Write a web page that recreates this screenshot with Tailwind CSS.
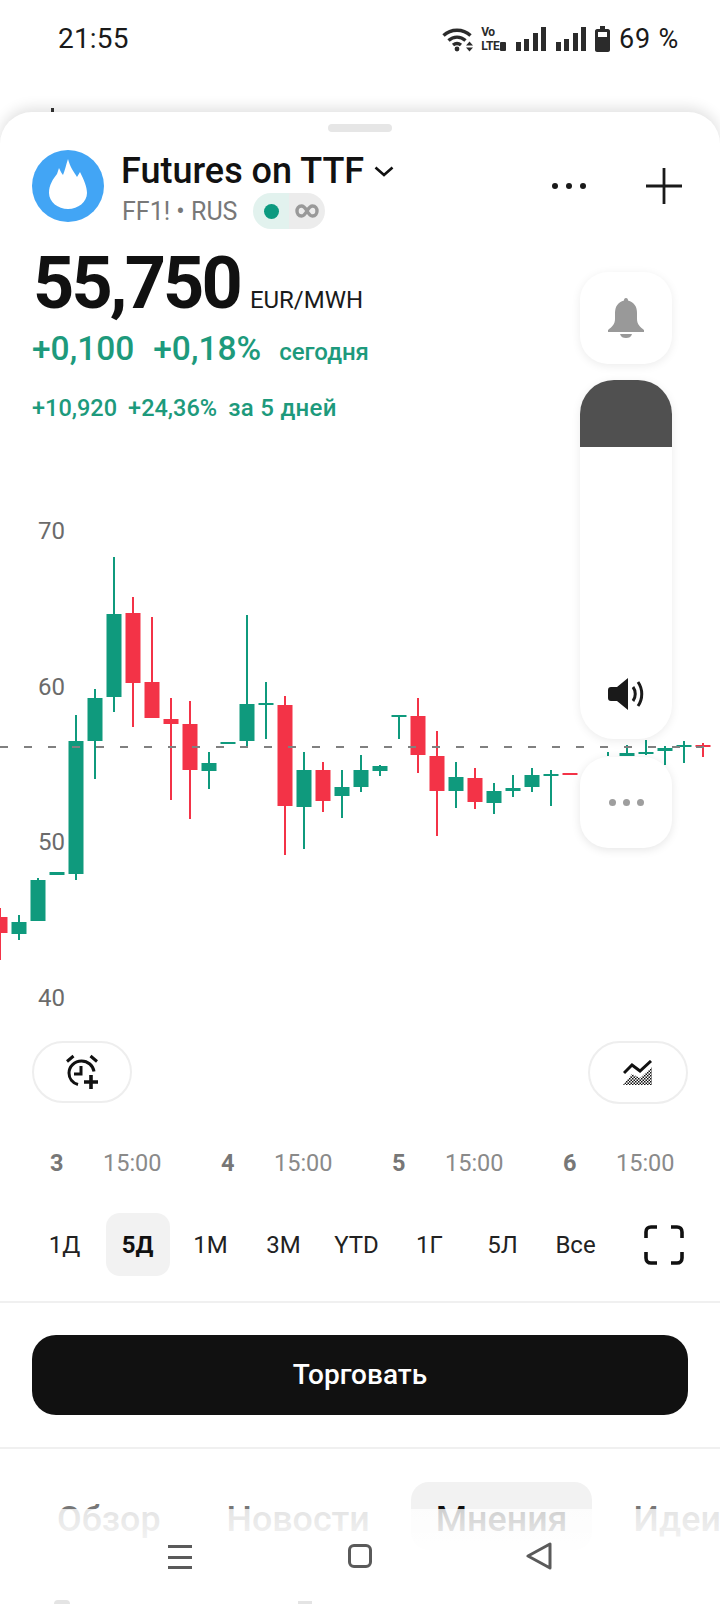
<!DOCTYPE html>
<html lang="ru">
  <head>
    <meta charset="UTF-8" />
    <title>Futures on TTF</title>
    <meta name="viewport" content="width=device-width, initial-scale=1.0" />
    <script src="https://cdn.jsdelivr.net/npm/@tailwindcss/browser@4"></script>
  </head>

  <body class="bg-white font-['Roboto',sans-serif]">
    <div class="relative w-[720px] h-[1604px] overflow-hidden bg-white">
      <!-- Status bar -->
      <div class="h-[78px] flex items-center pl-[58px] pr-[41px] text-[#1a1a1a]">
        <span class="text-[28px] leading-none tracking-[0.2px]">21:55</span>
        <div class="ml-auto flex items-center">
          <svg width="32" height="26" viewBox="0 0 32 26" fill="none" stroke="#2b2b2b" stroke-width="3.4">
            <path d="M1.5 9.5C9 2.5 21 2.5 28.5 9.5" />
            <path d="M6.5 14.5C11.5 10 18.5 10 23.5 14.5" />
            <path d="M11 19C13.5 17 16.5 17 19 19" />
            <circle cx="15" cy="23" r="2.4" fill="#2b2b2b" stroke="none" />
            <path d="M24 19.5L27.5 15.5L31 19.5ZM24 21.5L27.5 25.5L31 21.5Z" fill="#2b2b2b" stroke="none" />
          </svg>
          <div class="ml-[7px] w-[25px] flex flex-col text-[#2b2b2b] font-bold text-[12px] leading-[14px] tracking-[-0.4px]">
            <span>Vo</span>
            <span class="flex items-center">LTE<span class="ml-[1px] w-[6px] h-[9px] bg-[#2b2b2b] rounded-[1px]"></span></span>
          </div>
          <div class="ml-[10px] flex items-end gap-[3.300px] h-[24px]">
            <span class="w-[5px] h-[9px] bg-[#2b2b2b]"></span>
            <span class="w-[5px] h-[12px] bg-[#2b2b2b]"></span>
            <span class="w-[5px] h-[18px] bg-[#2b2b2b]"></span>
            <span class="w-[5px] h-[24px] bg-[#2b2b2b]"></span>
          </div>
          <div class="ml-[10px] flex items-end gap-[3.300px] h-[24px]">
            <span class="w-[5px] h-[9px] bg-[#2b2b2b]"></span>
            <span class="w-[5px] h-[12px] bg-[#2b2b2b]"></span>
            <span class="w-[5px] h-[18px] bg-[#2b2b2b]"></span>
            <span class="w-[5px] h-[24px] bg-[#2b2b2b]"></span>
          </div>
          <svg class="ml-[9px]" width="15" height="26" viewBox="0 0 15 26" fill="#2b2b2b">
            <path d="M5 0H10V3H13C14 3 15 4 15 5V24C15 25 14 26 13 26H2C1 26 0 25 0 24V5C0 4 1 3 2 3H5Z" />
            <rect x="3" y="6" width="9" height="5" fill="#fff" />
          </svg>
          <span class="ml-[9px] text-[27px] leading-none tracking-[0.8px]">69 %</span>
        </div>
      </div>

      <!-- Bit of the page behind the sheet -->
      <span class="absolute left-[51px] top-[108px] w-[3px] h-[4px] bg-[#333]"></span>

      <!-- Sheet -->
      <div class="relative mt-[34px] h-[1492px] rounded-t-[32px] bg-white shadow-[0_-4px_14px_rgba(0,0,0,0.12)] overflow-hidden">
        <div class="pt-[12px] flex justify-center">
          <div class="w-[64px] h-[8px] rounded-full bg-[#e6e6e6]"></div>
        </div>

        <!-- Header -->
        <div class="mt-[18px] flex pl-[32px] h-[80px]">
          <svg width="72" height="72" viewBox="0 0 72 72">
            <circle cx="36" cy="36" r="36" fill="#42a5f5" />
            <path fill="#fff" d="M36 9C38 17 42 22 45 27L48 22C52 30 55 37 55 43C55 52 46 59 36 59C26 59 17 52 17 43C17 35 21 29 25 24L27 18C29 22 30 24 31 25C33 20 34 15 36 9Z" />
          </svg>
          <div class="ml-[17px]">
            <div class="flex items-center h-[36px] pt-[6px]">
              <span class="text-[36px] leading-none font-medium text-[#111]">Futures on TTF</span>
              <svg class="ml-[10px]" width="20" height="11" viewBox="0 0 20 11" fill="none" stroke="#111" stroke-width="2.6">
                <path d="M1.5 1.5L10 9L18.5 1.5" />
              </svg>
            </div>
            <div class="mt-[7px] flex items-center h-[36px] pl-[1px]">
              <span class="text-[25px] leading-none text-[#787878]">FF1! • RUS</span>
              <div class="ml-[16px] w-[72px] h-[36px] rounded-full overflow-hidden flex">
                <div class="w-[36px] bg-[#e2f2ee] flex items-center justify-center">
                  <span class="w-[15px] h-[15px] rounded-full bg-[#0d9a80]"></span>
                </div>
                <div class="w-[36px] bg-[#ececec] flex items-center justify-center">
                  <svg width="24" height="14" viewBox="0 0 24 14" fill="none" stroke="#999" stroke-width="3.4">
                    <path d="M12 7C10 3.5 8.500 2 6.500 2C3.500 2 2 4.500 2 7C2 9.500 3.500 12 6.500 12C8.500 12 10 10.500 12 7C14 3.500 15.500 2 17.500 2C20.500 2 22 4.500 22 7C22 9.500 20.500 12 17.500 12C15.500 12 14 10.500 12 7Z" />
                  </svg>
                </div>
              </div>
            </div>
          </div>
          <div class="ml-auto mr-[38px] mt-[17px] h-[38px] flex items-center">
            <div class="flex gap-[8px]">
              <span class="w-[6px] h-[6px] rounded-full bg-[#1a1a1a]"></span>
              <span class="w-[6px] h-[6px] rounded-full bg-[#1a1a1a]"></span>
              <span class="w-[6px] h-[6px] rounded-full bg-[#1a1a1a]"></span>
            </div>
            <svg class="ml-[60px]" width="36" height="36" viewBox="0 0 36 36" stroke="#1a1a1a" stroke-width="2.8">
              <path d="M18 0V36M0 18H36" />
            </svg>
          </div>
        </div>

        <!-- Quote -->
        <div class="mt-[18px] pl-[32px]">
          <div class="flex items-baseline h-[72px]">
            <span class="ml-[1px] text-[72px] leading-[72px] font-bold text-[#111] tracking-[-2.9px]">55,750</span>
            <span class="ml-[10px] text-[24px] leading-none text-[#1a1a1a]">EUR/MWH</span>
          </div>
          <div class="mt-[9px] flex items-baseline h-[40px] font-medium text-[#1d9a7c]">
            <span class="text-[33.500px] leading-[40px]">+0,100</span>
            <span class="ml-[19px] text-[33.500px] leading-[40px]">+0,18%</span>
            <span class="ml-[18px] text-[24px] leading-[40px]">сегодня</span>
          </div>
          <div class="mt-[23px] flex items-baseline h-[32px] font-medium text-[#1d9a7c] text-[23.500px] leading-[32px]">
            <span>+10,920</span>
            <span class="ml-[11px]">+24,36%</span>
            <span class="ml-[11px] text-[24px] tracking-[0.3px]">за 5 дней</span>
          </div>
        </div>

        <!-- Chart -->
        <div class="relative h-[606px]">
          <svg id="chart" class="absolute inset-0" width="720" height="606" viewBox="0 424 720 606"></svg>
          <span class="absolute left-[38px] top-[92px] text-[24px] leading-[30px] text-[#6b6b6b]">70</span>
          <span class="absolute left-[38px] top-[248px] text-[24px] leading-[30px] text-[#6b6b6b]">60</span>
          <span class="absolute left-[38px] top-[403px] text-[24px] leading-[30px] text-[#6b6b6b]">50</span>
          <span class="absolute left-[38px] top-[559px] text-[24px] leading-[30px] text-[#6b6b6b]">40</span>
        </div>

        <!-- Alert and indicator buttons -->
        <div class="mt-[11px] h-[63px] flex items-start justify-between pl-[32px] pr-[32px]">
          <div class="w-[100px] h-[62px] rounded-[31px] border-2 border-[#eeeeee] flex items-center justify-center">
            <svg width="36" height="36" viewBox="0 0 36 36" fill="none" stroke="#111" stroke-width="3">
              <path d="M3 7.500L9.500 2M33 7.500L26.500 2" />
              <path d="M14 30.500C8.500 29 5 24.500 5 19C5 12.500 10.500 7 17.500 7C24 7 29 11.500 30 17.500" />
              <path d="M17 12V20H10" />
              <path d="M27 21V35M20 28H34" stroke-width="3.600" />
            </svg>
          </div>
          <div class="w-[100px] h-[63px] rounded-[32px] border-2 border-[#eeeeee] flex items-center justify-center">
            <svg width="30" height="26" viewBox="0 0 30 26" fill="none">
              <defs>
                <pattern id="checker" width="3" height="3" patternUnits="userSpaceOnUse">
                  <rect width="1.500" height="1.500" fill="#111" />
                  <rect x="1.500" y="1.500" width="1.500" height="1.500" fill="#111" />
                </pattern>
              </defs>
              <path d="M0 25L9 14L17 18L29 7V25Z" fill="url(#checker)" />
              <path d="M1 13L9 5L17 11L28 1" stroke="#111" stroke-width="3" />
            </svg>
          </div>
        </div>

        <!-- Time axis -->
        <div class="mt-[43px] flex pl-[50px] h-[32px] text-[23.500px] leading-[32px] text-[#8a8a8a]">
          <div class="flex w-[171px] shrink-0"><span class="w-[53px] font-bold text-[#777]">3</span><span>15:00</span></div>
          <div class="flex w-[171px] shrink-0"><span class="w-[53px] font-bold text-[#777]">4</span><span>15:00</span></div>
          <div class="flex w-[171px] shrink-0"><span class="w-[53px] font-bold text-[#777]">5</span><span>15:00</span></div>
          <div class="flex w-[171px] shrink-0"><span class="w-[53px] font-bold text-[#777]">6</span><span>15:00</span></div>
        </div>

        <!-- Range tabs -->
        <div class="mt-[34px] h-[63px] flex items-center pl-[28px] pr-[36px] text-[24px] text-[#222]">
          <span class="w-[73px] text-center">1Д</span>
          <span class="w-[73px] flex justify-center"><span class="w-[64px] h-[63px] rounded-[14px] bg-[#f2f2f2] flex items-center justify-center font-bold text-[#111]">5Д</span></span>
          <span class="w-[73px] text-center">1М</span>
          <span class="w-[73px] text-center">3М</span>
          <span class="w-[73px] text-center">YTD</span>
          <span class="w-[73px] text-center">1Г</span>
          <span class="w-[73px] text-center">5Л</span>
          <span class="w-[73px] text-center">Все</span>
          <svg class="ml-auto" width="40" height="40" viewBox="0 0 40 40" fill="none" stroke="#111" stroke-width="3.600">
            <path d="M2 13V7C2 4 4 2 7 2H13M27 2H33C36 2 38 4 38 7V13M38 27V33C38 36 36 38 33 38H27M13 38H7C4 38 2 36 2 33V27" />
          </svg>
        </div>

        <div class="mt-[25px] h-[2px] bg-[#f0f0f0]"></div>

        <!-- Trade button -->
        <div class="mt-[32px] mx-[32px] h-[80px] rounded-[24px] bg-[#111] flex items-center justify-center text-white text-[28px] font-medium">Торговать</div>

        <div class="mt-[32px] h-[2px] bg-[#f0f0f0]"></div>

        <!-- Section tabs -->
        <div class="mt-[33px] flex pl-[32px] gap-[16px] text-[35.800px] font-medium text-[#777] whitespace-nowrap">
          <span class="h-[68px] px-[25px] pt-[8px] flex items-center">Обзор</span>
          <span class="h-[68px] px-[25px] pt-[8px] flex items-center">Новости</span>
          <span class="h-[68px] px-[25px] pt-[8px] flex items-center rounded-[18px] bg-[#f2f2f2] text-[#111]">Мнения</span>
          <span class="h-[68px] px-[25px] pt-[8px] flex items-center">Идеи</span>
        </div>
      </div>

      <!-- Floating chart controls -->
      <div class="absolute left-[580px] top-[272px] w-[92px] flex flex-col">
        <div class="h-[92px] rounded-[28px] bg-white shadow-[0_2px_10px_rgba(0,0,0,0.08)] flex items-center justify-center">
          <svg width="36" height="40" viewBox="0 0 36 40" fill="#999">
            <path d="M18 0C19.500 0 20 1 20 2.500C26 4 29 8.500 29 15V21C29 26 32 29 36 32V34H0V32C4 29 7 26 7 21V15C7 8.500 10 4 16 2.500C16 1 16.500 0 18 0Z" />
            <path d="M12 36H24C23 39 21 40 18 40C15 40 13 39 12 36Z" />
          </svg>
        </div>
        <div class="mt-[16px] h-[359px] rounded-[34px] bg-white shadow-[0_2px_10px_rgba(0,0,0,0.08)] overflow-hidden flex flex-col">
          <div class="h-[67px] bg-[#505050]"></div>
          <div class="flex-1 flex items-end justify-center pb-[29px]">
            <svg width="36" height="32" viewBox="0 0 36 32" fill="none">
              <path d="M0 12C0 10 1 9 3 9H9L20 0V32L9 23H3C1 23 0 22 0 20Z" fill="#1a1a1a" />
              <path d="M25 9C28 13 28 19 25 23" stroke="#1a1a1a" stroke-width="3" />
              <path d="M30 4C35 11 35 21 30 28" stroke="#1a1a1a" stroke-width="3" />
            </svg>
          </div>
        </div>
        <div class="mt-[18px] h-[91px] rounded-[28px] bg-white shadow-[0_2px_10px_rgba(0,0,0,0.1)] flex items-center justify-center gap-[7px]">
          <span class="w-[7px] h-[7px] rounded-full bg-[#9e9e9e]"></span>
          <span class="w-[7px] h-[7px] rounded-full bg-[#9e9e9e]"></span>
          <span class="w-[7px] h-[7px] rounded-full bg-[#9e9e9e]"></span>
        </div>
      </div>

      <!-- Navigation bar over the fading page -->
      <div class="absolute left-0 right-0 top-[1509px] h-[95px] bg-gradient-to-b from-white/80 to-white to-60%">
        <div class="absolute left-[168px] top-[36px] w-[24px] h-[24px] flex flex-col justify-between">
          <span class="h-[3px] bg-[#5a5a5a]"></span>
          <span class="h-[3px] bg-[#5a5a5a]"></span>
          <span class="h-[3px] bg-[#5a5a5a]"></span>
        </div>
        <div class="absolute left-[348px] top-[35px] w-[24px] h-[24px] rounded-[6px] border-[3px] border-[#5a5a5a]"></div>
        <svg class="absolute left-[526px] top-[33px]" width="26" height="28" viewBox="0 0 26 28" fill="none" stroke="#5a5a5a" stroke-width="3" stroke-linejoin="round">
          <path d="M24 2V26L2 14Z" />
        </svg>
        <span class="absolute left-[54px] top-[91px] w-[16px] h-[4px] rounded-t-full bg-[#e4e4e4]"></span>
        <span class="absolute left-[298px] top-[92px] w-[14px] h-[3px] bg-[#e4e4e4]"></span>
      </div>
    </div>

    <script>
      // [centre x, up?, wick top, wick bottom, body top, body bottom]
      const candles = [
        [0, 0, 908, 960, 917, 933],
        [19, 1, 915, 940, 922, 934],
        [38, 1, 878, 921, 880, 921],
        [57, 1, 872, 875, 872, 875],
        [76, 1, 715, 880, 741, 874],
        [95, 1, 689, 779, 698, 741],
        [114, 1, 557, 712, 614, 697],
        [133, 0, 597, 727, 613, 683],
        [152, 0, 617, 718, 682, 718],
        [171, 0, 698, 800, 719, 724],
        [190, 0, 701, 819, 724, 770],
        [209, 1, 752, 789, 763, 771],
        [228, 1, 742, 744, 742, 744],
        [247, 1, 615, 747, 704, 741],
        [266, 1, 682, 739, 703, 705],
        [285, 0, 696, 855, 705, 806],
        [304, 1, 752, 849, 770, 807],
        [323, 0, 762, 812, 770, 801],
        [342, 1, 770, 818, 787, 796],
        [361, 1, 755, 792, 770, 787],
        [380, 1, 765, 776, 766, 771],
        [399, 1, 715, 739, 715, 717],
        [418, 0, 698, 773, 716, 755],
        [437, 0, 731, 836, 756, 791],
        [456, 1, 762, 808, 777, 791],
        [475, 0, 768, 809, 778, 802],
        [494, 1, 783, 814, 791, 803],
        [513, 1, 775, 797, 788, 791],
        [532, 1, 768, 792, 775, 787],
        [551, 1, 770, 806, 774, 776],
        [570, 0, 773, 775, 773, 775],
        [608, 1, 752, 756, 752, 752],
        [627, 1, 745, 756, 753, 756],
        [646, 1, 740, 755, 752, 754],
        [665, 1, 746, 765, 748, 751],
        [684, 1, 741, 763, 745, 747],
        [703, 0, 743, 757, 745, 747],
      ];

      let svg = "";
      for (const [x, up, wickTop, wickBottom, bodyTop, bodyBottom] of candles) {
        const color = up ? "#0f9a7d" : "#f33347";
        svg += `<rect x="${x - 1}" y="${wickTop}" width="2" height="${wickBottom - wickTop}" fill="${color}" />`;
        svg += `<rect x="${x - 7.5}" y="${bodyTop}" width="15" height="${bodyBottom - bodyTop}" fill="${color}" />`;
      }
      svg += `<line x1="0" x2="712" y1="747" y2="747" stroke="#808080" stroke-width="2" stroke-dasharray="8 16" />`;
      document.getElementById("chart").innerHTML = svg;
    </script>
  </body>
</html>
